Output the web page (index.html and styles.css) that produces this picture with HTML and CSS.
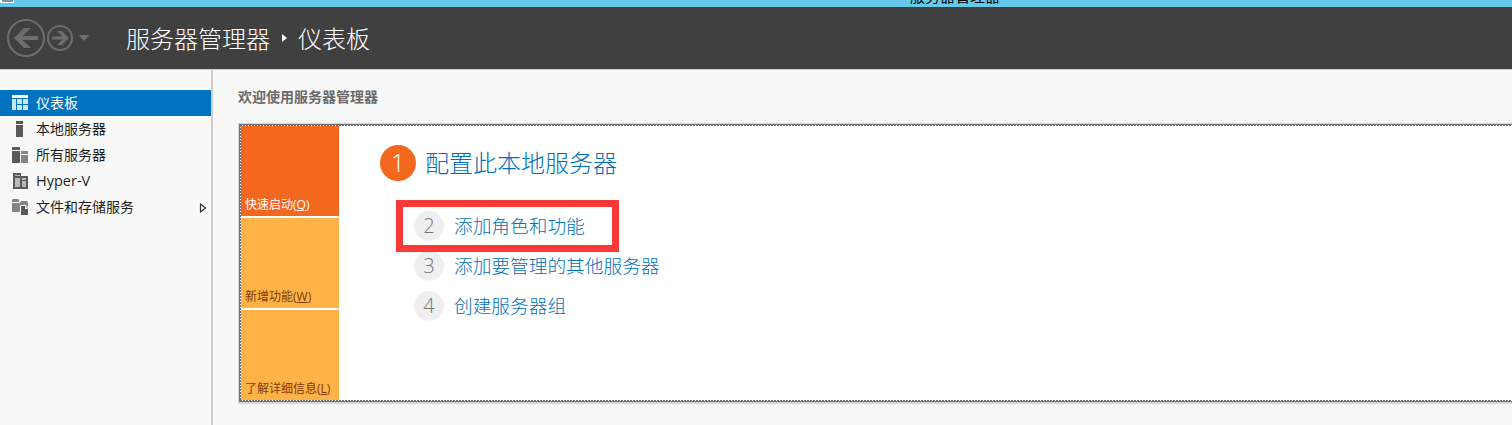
FILE: index.html
```html
<!DOCTYPE html>
<html lang="zh-CN">
<head>
<meta charset="utf-8">
<title>服务器管理器</title>
<link rel="stylesheet" href="styles.css">
</head>
<body>
<div class="titlebar"><span class="app-icon"></span><span class="window-title">服务器管理器</span></div>
<header class="header">
  <svg class="nav" width="92" height="62" viewBox="0 0 92 62" fill="none" stroke="#6d6d6d">
    <circle cx="26" cy="31" r="18" stroke-width="2"/>
    <path d="M14 31l10-10h7l-8.500 8H38v4H22.500l8.500 8h-7z" fill="#6d6d6d" stroke="none"/>
    <circle cx="60" cy="31" r="12" stroke-width="2"/>
    <path d="M69 31l-7-7h-5l5.500 5.500H52v3h10.500L57 38h5z" fill="#6d6d6d" stroke="none"/>
    <path d="M78.500 28h11l-5.500 6z" fill="#6d6d6d" stroke="none"/>
  </svg>
  <h1 class="crumbs"><span>服务器管理器</span><i class="crumb-arrow"></i><span>仪表板</span></h1>
</header>
<div class="body">
  <nav class="sidebar">
    <a class="item selected"><svg width="16" height="16"><path d="M0 0h16v3H0z" fill="#fff"/><path d="M0 4h4v11H0zM5 4h5v5H5zM11 4h5v5h-5zM5 10h5v5H5zM11 10h5v5h-5z" fill="#cce4f4"/></svg><span>仪表板</span></a>
    <a class="item"><svg width="16" height="16"><path d="M4 0h7v3H4zM4 4h7v12H4z" fill="#595959"/></svg><span>本地服务器</span></a>
    <a class="item"><svg width="16" height="16"><path d="M0 0h8v3H0zM0 4h8v12H0z" fill="#595959"/><path d="M9 4h7v3H9zM9 8h7v8H9z" fill="#858585"/></svg><span>所有服务器</span></a>
    <a class="item"><svg width="16" height="16"><path d="M1 0h8v3h7v13H1z" fill="#595959"/><path d="M3 2h5v1H3zM3 5h5v9H3zM10 5h4v2h-4zM10 8h4v6h-4z" fill="#b8b8b8"/></svg><span class="latin">Hyper-V</span></a>
    <a class="item"><svg width="16" height="16"><path d="M0 1l1-1h5l1 1v2H0zM0 4h8v9H0z" fill="#858585"/><path d="M8 3l1-1h6l1 1v4H8z" fill="#858585"/><path d="M8.500 6.500H14L16.500 9v7.500h-8z" fill="#595959" stroke="#f8f8f8"/><path d="M13 7v3h3z" fill="#f8f8f8"/></svg><span>文件和存储服务</span><svg class="expand" width="8" height="10"><path d="M1.500 1v8l5-4z" fill="none" stroke="#333" stroke-width="1.200"/></svg></a>
  </nav>
  <main class="main">
    <h2 class="welcome">欢迎使用服务器管理器</h2>
    <section class="panel">
      <div class="focus">
        <div class="tiles">
          <a class="tile active">快速启动(<u>Q</u>)</a>
          <a class="tile">新增功能(<u>W</u>)</a>
          <a class="tile">了解详细信息(<u>L</u>)</a>
        </div>
        <div class="steps">
          <a class="step primary"><b>1</b><span>配置此本地服务器</span></a>
          <a class="step marked"><b>2</b><span>添加角色和功能</span></a>
          <a class="step"><b>3</b><span>添加要管理的其他服务器</span></a>
          <a class="step"><b>4</b><span>创建服务器组</span></a>
        </div>
      </div>
    </section>
  </main>
</div>
</body>
</html>
```
FILE: styles.css
```css
*, ::after { box-sizing: border-box; }
body {
  margin: 0;
  height: 425px;
  overflow: hidden;
  display: flex;
  flex-direction: column;
  background: #f8f8f8;
  color: #1e1e1e;
  font: 14px "Open Sans", "Noto Sans CJK SC", sans-serif;
}
.titlebar {
  flex: none;
  height: 7px;
  background: #65c9ea;
  display: flex;
  overflow: hidden;
}
.app-icon {
  width: 14px;
  height: 3px;
  background: #7595a8;
  border: solid #fff;
  border-width: 0 1px 1px 2px;
}
.window-title {
  margin: -13px 0 0 896px;
  font-size: 15px;
  line-height: 18px;
  color: #000;
}
.header {
  flex: none;
  height: 63px;
  display: flex;
  background: #404040;
  border-bottom: 1px solid #ccc;
}
.nav { flex: none; }
.crumbs {
  display: flex;
  align-items: center;
  margin: 0 0 0 34px;
  height: 61px;
  color: #fff;
  font-size: 24px;
  font-weight: 300;
}
.crumb-arrow {
  margin: 0 11px 0 12px;
  border: solid transparent;
  border-width: 4px 0 4px 5px;
  border-left-color: #fff;
}
.body { flex: 1; display: flex; }
.sidebar {
  width: 213px;
  padding-top: 20px;
  border-right: 2px solid #ccc;
}
.item {
  display: flex;
  align-items: center;
  gap: 8px;
  height: 26px;
  padding: 0 4px 0 12px;
}
.item span { padding-bottom: 2px; }
.item .latin { font-size: 14.500px; }
.selected { background: #0072c0; color: #fff; }
.expand { margin: 2px 0 0 auto; }
.main { flex: 1; padding: 17px 0 0 25px; }
.welcome {
  margin: 0;
  height: 36px;
  line-height: 20px;
  font-size: 14px;
  color: #6a6a6a;
}
.panel {
  height: 281px;
  border: solid #d8d8d8;
  border-width: 1px 0 2px 1px;
}
.focus {
  height: 278px;
  display: flex;
  padding: 1px 0 1px 1px;
  border: solid #707070;
  border-width: 1px 0 1px 1px;
  background:
    repeating-linear-gradient(90deg, #707070 0 2px, #fff 2px 3px) 0 0 / 100% 1px no-repeat,
    repeating-linear-gradient(90deg, #707070 0 2px, #fff 2px 3px) 0 100% / 100% 1px no-repeat,
    repeating-linear-gradient(#707070 0 2px, #fff 2px 3px) 0 0 / 1px 100% no-repeat,
    #fff;
}
.tiles {
  width: 98px;
  display: flex;
  flex-direction: column;
  gap: 2px;
}
.tile {
  height: 90px;
  display: flex;
  align-items: flex-end;
  padding: 0 0 2px 4px;
  background: #ffb245;
  color: #7f3a0c;
  font-size: 12px;
  line-height: 18px;
  white-space: nowrap;
}
.active { background: #f4671f; color: #fff; }
.steps { padding: 19px 0 0 41px; }
.step {
  display: flex;
  align-items: center;
  height: 40px;
  margin-left: 34px;
  color: #0070bc;
  font-size: 18.700px;
  font-weight: 300;
  position: relative;
}
.step span { padding-bottom: 3px; }
.step b {
  width: 30px;
  height: 30px;
  margin-right: 10px;
  border-radius: 50%;
  background: #efefef;
  color: #777;
  font-size: 20px;
  font-weight: 300;
  line-height: 29px;
  text-align: center;
}
.step.primary {
  height: 36px;
  margin: 0 0 25px;
  font-size: 24px;
}
.step.primary b {
  width: 36px;
  height: 36px;
  margin-right: 9px;
  background: #f4671f;
  color: #fff;
  font-size: 25px;
  line-height: 35px;
}
.marked::after {
  content: "";
  position: absolute;
  left: -18px;
  top: -6px;
  width: 223px;
  height: 52px;
  border: 7px solid #fc3838;
}
.marked { z-index: 1; }
```
